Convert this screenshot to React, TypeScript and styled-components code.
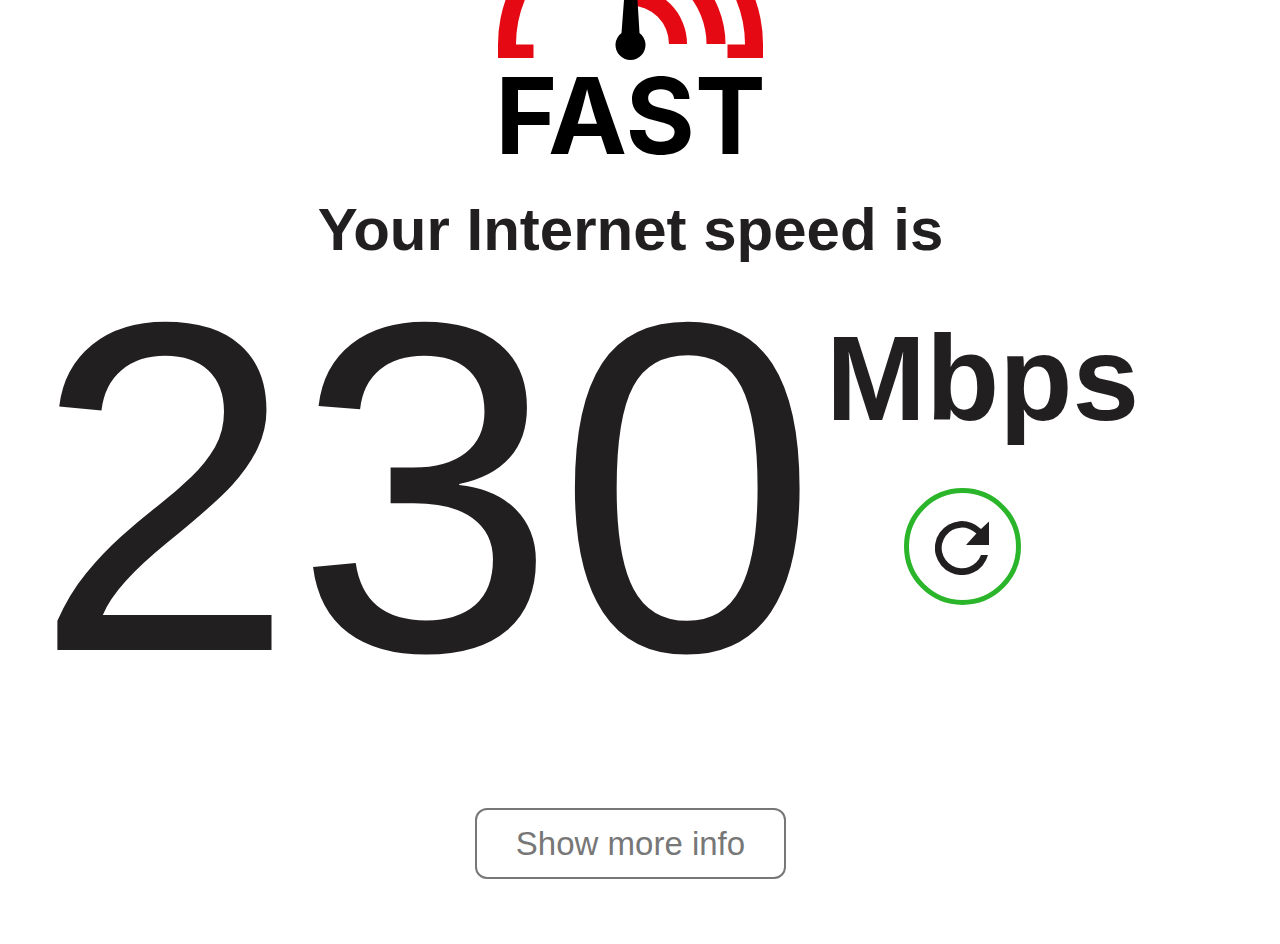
import React from 'react';
import styled, { createGlobalStyle } from 'styled-components';

const ink = '#221f20';

const GlobalStyle = createGlobalStyle`
  * { box-sizing: border-box; }
  body {
    margin: 0;
    background: #fff;
    color: ${ink};
    font-family: "Liberation Sans", Arial, Helvetica, sans-serif;
  }
`;

const Page = styled.main`
  display: flex;
  flex-direction: column;
  align-items: center;
  padding: 0 19px 64px 0;
`;

const Logo = styled.a`
  display: flex;
  flex-direction: column;
  align-items: center;
  color: #000;
  text-decoration: none;
`;

const Gauge = styled.svg`
  display: block;
  width: 265px;
  height: 60px;
`;

const Wordmark = styled.span`
  margin-top: 8px;
  font-family: Inter, sans-serif;
  font-size: 106px;
  font-weight: 700;
  line-height: 96px;
`;

const Heading = styled.h1`
  margin: 30px 0 2px;
  font-size: 60px;
  line-height: 72px;
  text-align: center;
`;

const Result = styled.section`
  display: flex;
  align-items: flex-start;
  justify-content: center;
  gap: 8px;
  padding-right: 88px;
`;

const Speed = styled.output`
  font-size: 470px;
  line-height: 440px;
`;

const UnitColumn = styled.div`
  display: flex;
  flex-direction: column;
  align-items: flex-start;
  gap: 50px;
  padding-top: 50px;
`;

const Unit = styled.span`
  font-size: 120px;
  font-weight: 700;
  line-height: 120px;
`;

const RefreshButton = styled.button`
  display: flex;
  align-items: center;
  justify-content: center;
  width: 117px;
  height: 117px;
  margin-left: 78px;
  padding: 0;
  border: 5px solid #2ab52a;
  border-radius: 50%;
  background: transparent;
  color: ${ink};
  cursor: pointer;
`;

const InfoButton = styled.button`
  height: 71px;
  margin-top: 100px;
  padding: 0 39px;
  border: 2px solid #777;
  border-radius: 12px;
  background: transparent;
  color: #777;
  font-family: inherit;
  font-size: 33px;
  line-height: 40px;
  cursor: pointer;
`;

export default function App() {
  return (
    <>
      <GlobalStyle />
      <Page>
        <Logo href="#" aria-label="FAST">
          <Gauge viewBox="0 0 265 60" aria-hidden="true">
            <g fill="#e50914">
              <path d="M0 58V44A132.5 132.5 0 0 1 132.5 -88.500A132.5 132.5 0 0 1 265 44V58H229.500V44.500H247V44A114.500 114.500 0 0 0 132.500 -70.500A114.500 114.500 0 0 0 18 44V44.500H35.500V58Z" />
              <path d="M132.500 -51A95 95 0 0 1 227.500 44H208.500A76 76 0 0 0 132.500 -32Z" />
              <path d="M132.500 -12.500A56.500 56.500 0 0 1 189 44H171A38.500 38.500 0 0 0 132.500 5.500Z" />
            </g>
            <path d="M126 0H139.500L141.500 33A15 15 0 1 1 123.500 33Z" fill="#000" />
          </Gauge>
          <Wordmark>FAST</Wordmark>
        </Logo>
        <Heading>Your Internet speed is</Heading>
        <Result>
          <Speed>230</Speed>
          <UnitColumn>
            <Unit>Mbps</Unit>
            <RefreshButton type="button" aria-label="Test again">
              <svg width="54" height="56" viewBox="0 -2 54 56" fill="currentColor" aria-hidden="true">
                <path d="M53 34A27 27 0 1 1 46 8L54 .5V24H31L41.400 12.600A20.300 20.300 0 1 0 46 34Z" />
              </svg>
            </RefreshButton>
          </UnitColumn>
        </Result>
        <InfoButton type="button">Show more info</InfoButton>
      </Page>
    </>
  );
}
